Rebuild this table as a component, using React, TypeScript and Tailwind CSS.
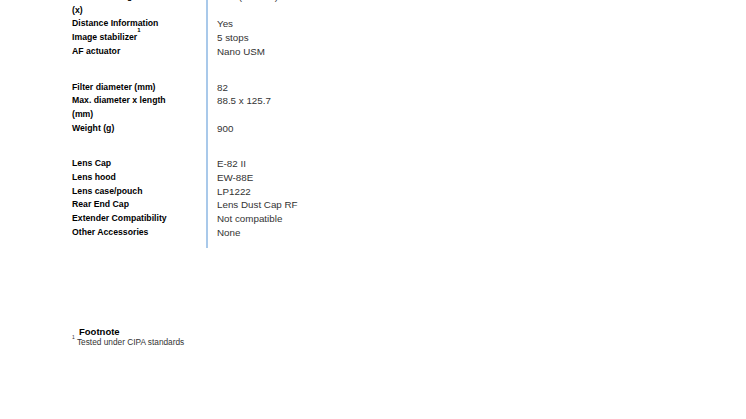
import React from "react";

type Row = { label: React.ReactNode; value: string };

const groups: Row[][] = [
  [
    { label: "Maximum magnification (x)", value: "0.16 (at 0.6m)" },
    { label: "Distance Information", value: "Yes" },
    {
      label: (
        <>
          Image stabilizer<sup className="text-[6px] align-[5px]">1</sup>
        </>
      ),
      value: "5 stops",
    },
    { label: "AF actuator", value: "Nano USM" },
  ],
  [
    { label: "Filter diameter (mm)", value: "82" },
    { label: "Max. diameter x length (mm)", value: "88.5 x 125.7" },
    { label: "Weight (g)", value: "900" },
  ],
  [
    { label: "Lens Cap", value: "E-82 II" },
    { label: "Lens hood", value: "EW-88E" },
    { label: "Lens case/pouch", value: "LP1222" },
    { label: "Rear End Cap", value: "Lens Dust Cap RF" },
    { label: "Extender Compatibility", value: "Not compatible" },
    { label: "Other Accessories", value: "None" },
  ],
];

function Spacer({ h }: { h: string }) {
  return (
    <div className="flex">
      <div className="w-[134px] shrink-0" />
      <div className={`border-l-2 border-[#a9c9ea] ${h}`} />
    </div>
  );
}

export default function App() {
  return (
    <div
      className="w-[746px] h-[419px] overflow-hidden bg-white text-black"
      style={{ fontFamily: "'Liberation Sans', Arial, sans-serif" }}
    >
      <div className="-mt-[10px] pl-[72px]">
        <div className="flex flex-col w-[330px]">
          {groups.map((g, i) => (
            <React.Fragment key={i}>
              {i > 0 && <Spacer h="h-[22px]" />}
              {g.map((r, j) => (
                <div key={j} className="flex leading-[13.7px]">
                  <div className="w-[134px] shrink-0 font-bold text-[8.7px] pr-[34px]">{r.label}</div>
                  <div className="border-l-2 border-[#a9c9ea] pl-[9px] text-[9.8px] text-[#333]">
                    {r.value}
                  </div>
                </div>
              ))}
            </React.Fragment>
          ))}
          <Spacer h="h-[8px]" />
        </div>
        <div className="mt-[78px]">
          <div className="pl-[7px] text-[9.5px] font-bold leading-[11px]">Footnote</div>
          <div className="text-[8.3px] leading-[11px] text-[#333]">
            <sup className="text-[5px] align-[3px]">1</sup> Tested under CIPA standards
          </div>
        </div>
      </div>
    </div>
  );
}
